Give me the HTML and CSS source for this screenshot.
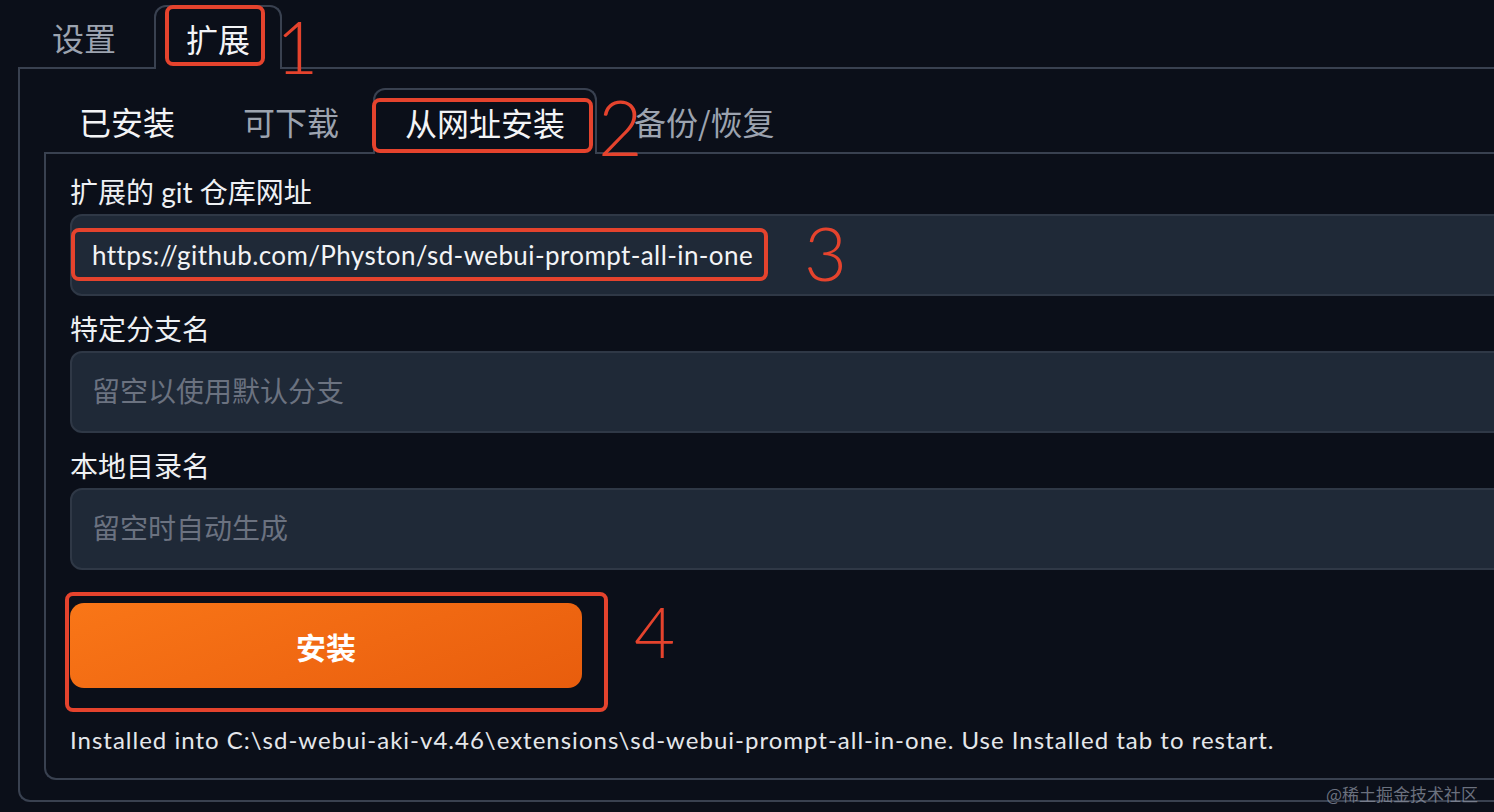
FILE: index.html
```html
<!DOCTYPE html>
<html lang="zh-CN">
<head>
<meta charset="utf-8">
<title>扩展 - 从网址安装</title>
<link rel="stylesheet" href="styles.css">
</head>
<body>
<div class="app">
  <div class="tabs outer-tabs">
    <button class="tab">设置</button>
    <button class="tab selected">扩展</button>
  </div>
  <div class="panel outer-panel">
    <div class="tabs inner-tabs">
      <button class="tab bright">已安装</button>
      <button class="tab">可下载</button>
      <button class="tab selected">从网址安装</button>
      <button class="tab after-selected">备份/恢复</button>
    </div>
    <div class="panel inner-panel">
      <div class="field">
        <span class="label">扩展的 git 仓库网址</span>
        <input class="input" type="text" value="https://github.com/Physton/sd-webui-prompt-all-in-one">
      </div>
      <div class="field">
        <span class="label">特定分支名</span>
        <input class="input" type="text" placeholder="留空以使用默认分支">
      </div>
      <div class="field">
        <span class="label">本地目录名</span>
        <input class="input" type="text" placeholder="留空时自动生成">
      </div>
      <button class="primary">安装</button>
      <p class="status">Installed into C:\sd-webui-aki-v4.46\extensions\sd-webui-prompt-all-in-one. Use Installed tab to restart.</p>
    </div>
  </div>

  <div class="mark box1"></div>
  <div class="mark box2"></div>
  <div class="mark box3"></div>
  <div class="mark box4"></div>
  <div class="num n1">1</div>
  <div class="num n2">2</div>
  <div class="num n3">3</div>
  <div class="num n4">4</div>

  <div class="watermark">@稀土掘金技术社区</div>
</div>
</body>
</html>
```
FILE: styles.css
```css
html, body {
  margin: 0;
  padding: 0;
  background: #0b0f19;
  overflow: hidden;
}

body {
  width: 1494px;
  height: 812px;
  font-family: "Lato", "Noto Sans CJK SC", sans-serif;
  color: #e5e7eb;
}

.app {
  position: relative;
  width: 1600px;
  height: 812px;
  padding: 5px 0 0 18px;
  box-sizing: border-box;
}

.tabs {
  display: flex;
  align-items: flex-end;
}

.outer-tabs {
  height: 62px;
}

.inner-tabs {
  height: 64px;
  padding-left: 1px;
}

.tab {
  font-family: "Noto Sans CJK SC", sans-serif;
  font-size: 32px;
  color: #9ca3af;
  background: transparent;
  border: 2px solid transparent;
  border-bottom: none;
  padding: 0 32px;
  height: 100%;
  line-height: 1;
  cursor: pointer;
}

.tab.bright {
  color: #f3f4f6;
}

.tab.selected {
  color: #f3f4f6;
  background: #0b0f19;
  border-color: #394150;
  border-radius: 12px 12px 0 0;
  height: calc(100% + 2px);
  margin-bottom: -2px;
  position: relative;
  z-index: 1;
}

.inner-tabs .tab.selected {
  padding: 0 30px;
}

.inner-tabs .tab.after-selected {
  padding-left: 35px;
}

.outer-tabs .tab {
  padding: 0 32px;
}

.outer-tabs .tab.selected {
  padding: 0 30px;
  margin-left: 4px;
}

.panel {
  border: 2px solid #394150;
  border-right: none;
  border-radius: 0 0 0 12px;
}

.outer-panel {
  padding: 19px 0 20px 24px;
}

.inner-panel {
  padding: 21px 24px 23px 24px;
  display: flex;
  flex-direction: column;
}

.field {
  display: flex;
  flex-direction: column;
  gap: 5px;
}

.field + .field {
  margin-top: 16px;
}

.label {
  font-size: 28px;
  line-height: 34px;
  color: #eef0f3;
}

.input {
  height: 82px;
  box-sizing: border-box;
  width: 100%;
  background: #1f2937;
  border: 2px solid #2f3846;
  border-radius: 12px;
  padding: 0 20px;
  font-family: "Lato", "Noto Sans CJK SC", sans-serif;
  font-size: 26px;
  letter-spacing: 0.4px;
  color: #f3f4f6;
  outline: none;
}

.input::placeholder {
  color: #6b7280;
  font-family: "Noto Sans CJK SC", sans-serif;
  font-size: 28px;
  letter-spacing: 0;
}

.primary {
  margin-top: 33px;
  width: 512px;
  height: 85px;
  border: none;
  border-radius: 14px;
  background: linear-gradient(160deg, #f97617 0%, #f06812 55%, #e85d0d 100%);
  color: #ffffff;
  font-family: "Noto Sans CJK SC", sans-serif;
  font-weight: 700;
  font-size: 30px;
  cursor: pointer;
}

.status {
  margin: 37px 0 0;
  font-size: 24px;
  letter-spacing: 1px;
  line-height: 30px;
  color: #e5e7eb;
  white-space: nowrap;
}

/* annotation overlays */
.mark {
  position: absolute;
  border: 4px solid #e5432d;
  border-radius: 8px;
  box-sizing: border-box;
  z-index: 5;
}

.box1 { left: 165px; top: 5px; width: 100px; height: 61px; }
.box2 { left: 372px; top: 98px; width: 221px; height: 55px; }
.box3 { left: 71px; top: 228px; width: 697px; height: 53px; }
.box4 { left: 65px; top: 592px; width: 543px; height: 120px; }

.num {
  position: absolute;
  font-family: "Lato", "Liberation Sans", sans-serif;
  font-weight: 300;
  color: #e5432d;
  line-height: 1;
  z-index: 5;
}

.n1 { left: 276px; top: 10px; font-size: 73px; }
.n2 { left: 598px; top: 88px; font-size: 77px; }
.n3 { left: 804px; top: 216px; font-size: 74px; }
.n4 { left: 634px; top: 595px; font-size: 71px; }

.watermark {
  position: absolute;
  left: 1326px;
  top: 782px;
  font-family: "Noto Sans CJK SC", sans-serif;
  font-size: 17px;
  line-height: 24px;
  color: rgba(140, 146, 160, 0.75);
  z-index: 5;
}
```
